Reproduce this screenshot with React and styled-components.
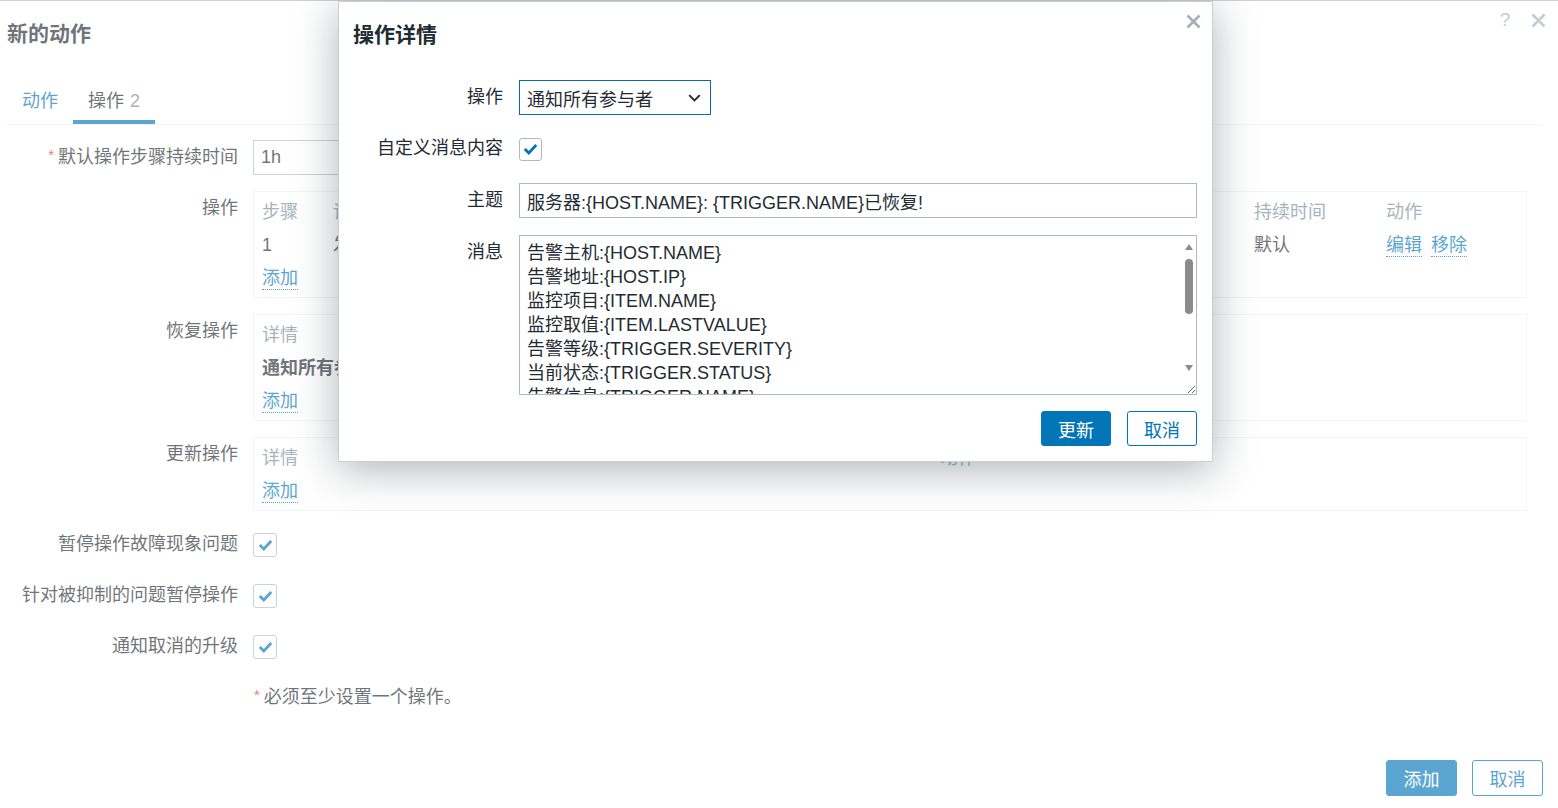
import React from "react";
import styled, { createGlobalStyle } from "styled-components";

const Global = createGlobalStyle`
  html, body { margin: 0; padding: 0; background: #fff; overflow: hidden; }
  body {
    font-family: "Liberation Sans", Arial, "Noto Sans CJK SC", sans-serif;
    font-size: 18px;
    color: #1f2c33;
  }
  * { box-sizing: border-box; }
`;

const Page = styled.div`
  position: relative;
  height: 100vh;
  display: flex;
  flex-direction: column;
  padding: 0 15px 12px 7px;
  border-top: 1px solid #c9d1d6;
`;

const Header = styled.div`
  display: flex;
  justify-content: space-between;
  align-items: flex-start;
  height: 79px;
`;

const Title = styled.h1`
  margin: 0;
  padding-top: 22px;
  font-size: 21px;
  line-height: 21px;
  font-weight: bold;
  color: #1f2c33;
`;

const HeaderIcons = styled.div`
  display: flex;
  gap: 9px;
  margin-top: 7px;
  margin-right: -7px;
`;

const IconBtn = styled.span`
  width: 24px;
  height: 24px;
  display: flex;
  align-items: center;
  justify-content: center;
  color: #a2b1b8;
  font-size: 19px;
  line-height: 24px;
`;

const TabBar = styled.div`
  display: flex;
  border-bottom: 1px solid #ebeef0;
`;

const Tab = styled.div`
  padding: 0 15px;
  height: 44px;
  line-height: 42px;
  border-bottom: 4px solid ${(p) => (p.$active ? "#0275b8" : "transparent")};
  color: ${(p) => (p.$active ? "#1f2c33" : "#0275b8")};
  white-space: nowrap;
`;

const TabCount = styled.span`
  color: #768d99;
  margin-left: 6px;
`;

const Form = styled.div`
  display: grid;
  grid-template-columns: 231px 1fr;
  column-gap: 15px;
  row-gap: 16px;
  padding-top: 15px;
  align-items: start;
`;

const Label = styled.div`
  text-align: right;
  height: ${(p) => p.$h || 35}px;
  line-height: ${(p) => p.$h || 35}px;
  white-space: nowrap;
  color: #1f2c33;
`;

const Req = styled.span`
  color: #e33734;
  font-size: 15px;
  position: relative;
  top: -3px;
  margin-right: 4px;
`;

const Cell = styled.div`
  height: 35px;
  display: flex;
  align-items: center;
`;

const TextInput = styled.input`
  height: 35px;
  width: ${(p) => p.$w || "100%"};
  border: 1px solid #acbbc2;
  border-radius: 0;
  padding: 0 7px;
  font: inherit;
  color: #1f2c33;
  background: #fff;
  outline: none;
  display: block;
`;

const OpsBox = styled.div`
  border: 1px solid #ebeef0;
  padding: 4px 8px 2px;
  margin-right: 16px;
  display: grid;
  grid-template-columns: ${(p) => p.$cols};
`;

const TCell = styled.div`
  line-height: 33px;
  height: 33px;
  white-space: nowrap;
  overflow: hidden;
  color: ${(p) => (p.$head ? "#768d99" : "#1f2c33")};
  font-weight: ${(p) => (p.$bold ? "bold" : "normal")};
  grid-column: ${(p) => (p.$full ? "1 / -1" : "auto")};
  display: flex;
  gap: 9px;
`;

const Link = styled.span`
  color: #0275b8;
  line-height: 22px;
  align-self: center;
  border-bottom: 1px dotted #0275b8;
`;

const CheckBox = styled.span`
  width: ${(p) => p.$size || 24}px;
  height: ${(p) => p.$size || 24}px;
  border: 1px solid #acbbc2;
  border-radius: 3px;
  display: inline-flex;
  align-items: center;
  justify-content: center;
  background: #fff;
`;

const Note = styled.div`
  height: 35px;
  line-height: 35px;
  padding-left: 1px;
  color: #1f2c33;
`;

const Footer = styled.div`
  margin-top: auto;
  display: flex;
  justify-content: flex-end;
  gap: 15px;
`;

const Button = styled.button`
  height: ${(p) => p.$h || 36}px;
  min-width: ${(p) => p.$w || 71}px;
  padding: 0 14px;
  border-radius: 3px;
  border: 1px solid #0275b8;
  background: ${(p) => (p.$secondary ? "#fff" : "#0275b8")};
  color: ${(p) => (p.$secondary ? "#0275b8" : "#fff")};
  font: inherit;
  font-size: 18px;
  cursor: pointer;
`;

const Shade = styled.div`
  position: absolute;
  inset: 0;
  background: rgba(255, 255, 255, 0.35);
  z-index: 1;
`;

const Dialog = styled.div`
  position: absolute;
  left: 338px;
  top: 0;
  width: 875px;
  background: #fff;
  border: 1px solid #c9d0d4;
  box-shadow: 0 8px 40px rgba(20, 35, 45, 0.34);
  z-index: 2;
  padding: 0 15px 15px 14px;
  display: flex;
  flex-direction: column;
`;

const DialogHeader = styled.div`
  display: flex;
  justify-content: space-between;
  align-items: flex-start;
  height: 78px;
  margin-right: -1px;
`;

const DialogForm = styled.div`
  display: grid;
  grid-template-columns: 150px 1fr;
  column-gap: 16px;
  row-gap: 17px;
  align-items: start;
`;

const SelectBtn = styled.div`
  width: 192px;
  height: 35px;
  border: 1px solid #0b6aa8;
  padding: 0 9px 0 7px;
  display: flex;
  align-items: center;
  justify-content: space-between;
  color: #1f2c33;
  background: #fff;
`;

const CheckCell = styled.div`
  height: 34px;
  display: flex;
  align-items: center;
`;

const AreaWrap = styled.div`
  position: relative;
`;

const TextArea = styled.textarea`
  width: 100%;
  height: 160px;
  border: 1px solid #acbbc2;
  border-radius: 0;
  padding: 5px 24px 6px 7px;
  font: inherit;
  line-height: 24px;
  color: #1f2c33;
  resize: vertical;
  outline: none;
  overflow: hidden;
  display: block;
`;

const ScrollBar = styled.div`
  position: absolute;
  top: 1px;
  right: 1px;
  width: 14px;
  height: 143px;
  background: #fff;
  display: flex;
  flex-direction: column;
  align-items: center;
  padding: 8px 0 8px;
  pointer-events: none;
`;

const Arrow = styled.span`
  width: 0;
  height: 0;
  border-left: 4.5px solid transparent;
  border-right: 4.5px solid transparent;
  ${(p) =>
    p.$down
      ? "border-top: 6px solid #8b8b8b; margin-top: auto;"
      : "border-bottom: 6px solid #8b8b8b;"}
`;

const Thumb = styled.span`
  width: 8px;
  height: 55px;
  margin-top: 9px;
  border-radius: 4px;
  background: #8b8b8b;
`;

const DialogFooter = styled.div`
  display: flex;
  justify-content: flex-end;
  gap: 16px;
  margin-top: 16px;
`;

const Check = ({ color = "#0275b8" }) => (
  <svg width="15" height="12" viewBox="0 0 15 12">
    <polyline
      points="1.8,6 5.8,10 13.2,2"
      fill="none"
      stroke={color}
      strokeWidth="2.8"
    />
  </svg>
);

const CloseIcon = () => (
  <svg width="15" height="15" viewBox="0 0 15 15">
    <path d="M1.5 1.5L13.5 13.5M13.5 1.5L1.5 13.5" stroke="#a2b1b8" strokeWidth="2.6" />
  </svg>
);

const Chevron = () => (
  <svg width="13" height="8" viewBox="0 0 13 8">
    <path d="M1.2 1.2L6.5 6.5L11.8 1.2" fill="none" stroke="#1f2c33" strokeWidth="1.9" />
  </svg>
);

const message = [
  "告警主机:{HOST.NAME}",
  "告警地址:{HOST.IP}",
  "监控项目:{ITEM.NAME}",
  "监控取值:{ITEM.LASTVALUE}",
  "告警等级:{TRIGGER.SEVERITY}",
  "当前状态:{TRIGGER.STATUS}",
  "告警信息:{TRIGGER.NAME}",
  "告警时间:{EVENT.DATE} {EVENT.TIME}",
  "恢复时间:{EVENT.RECOVERY.DATE} {EVENT.RECOVERY.TIME}",
  "持续时间:{EVENT.AGE}",
  "事件ID:{EVENT.ID}",
  "问题详情:{ITEM.NAME}:{ITEM.VALUE}",
  "恢复状态:已恢复",
].join("\n");

export default function App() {
  return (
    <>
      <Global />
      <Page>
        <Header>
          <Title>新的动作</Title>
          <HeaderIcons>
            <IconBtn>?</IconBtn>
            <IconBtn>
              <CloseIcon />
            </IconBtn>
          </HeaderIcons>
        </Header>

        <TabBar>
          <Tab>动作</Tab>
          <Tab $active>
            操作<TabCount>2</TabCount>
          </Tab>
        </TabBar>

        <Form>
          <Label>
            <Req>*</Req>默认操作步骤持续时间
          </Label>
          <Cell>
            <TextInput $w="255px" defaultValue="1h" />
          </Cell>

          <Label>操作</Label>
          <OpsBox $cols="71px 787px 134px 132px 1fr">
            <TCell $head>步骤</TCell>
            <TCell $head>详情</TCell>
            <TCell $head>开始于</TCell>
            <TCell $head>持续时间</TCell>
            <TCell $head>动作</TCell>
            <TCell>1</TCell>
            <TCell>发送消息给用户群组: Zabbix administrators 通过 所有介质</TCell>
            <TCell>立即地</TCell>
            <TCell>默认</TCell>
            <TCell>
              <Link>编辑</Link>
              <Link>移除</Link>
            </TCell>
            <TCell $full>
              <Link>添加</Link>
            </TCell>
          </OpsBox>

          <Label>恢复操作</Label>
          <OpsBox $cols="678px 1fr">
            <TCell $head>详情</TCell>
            <TCell $head>动作</TCell>
            <TCell $bold>通知所有参与者</TCell>
            <TCell>
              <Link>编辑</Link>
              <Link>移除</Link>
            </TCell>
            <TCell $full>
              <Link>添加</Link>
            </TCell>
          </OpsBox>

          <Label>更新操作</Label>
          <OpsBox $cols="678px 1fr">
            <TCell $head>详情</TCell>
            <TCell $head>动作</TCell>
            <TCell $full>
              <Link>添加</Link>
            </TCell>
          </OpsBox>

          <Label>暂停操作故障现象问题</Label>
          <Cell>
            <CheckBox>
              <Check />
            </CheckBox>
          </Cell>

          <Label>针对被抑制的问题暂停操作</Label>
          <Cell>
            <CheckBox>
              <Check />
            </CheckBox>
          </Cell>

          <Label>通知取消的升级</Label>
          <Cell>
            <CheckBox>
              <Check />
            </CheckBox>
          </Cell>

          <div />
          <Note>
            <Req>*</Req>必须至少设置一个操作。
          </Note>
        </Form>

        <Footer>
          <Button>添加</Button>
          <Button $secondary>取消</Button>
        </Footer>

        <Shade />

        <Dialog>
          <DialogHeader>
            <Title>操作详情</Title>
            <HeaderIcons>
              <IconBtn>
                <CloseIcon />
              </IconBtn>
            </HeaderIcons>
          </DialogHeader>

          <DialogForm>
            <Label>操作</Label>
            <div>
              <SelectBtn>
                <span>通知所有参与者</span>
                <Chevron />
              </SelectBtn>
            </div>

            <Label $h={33}>自定义消息内容</Label>
            <CheckCell>
              <CheckBox $size={23}>
                <Check />
              </CheckBox>
            </CheckCell>

            <Label>主题</Label>
            <TextInput defaultValue="服务器:{HOST.NAME}: {TRIGGER.NAME}已恢复!" />

            <Label>消息</Label>
            <AreaWrap>
              <TextArea defaultValue={message} />
              <ScrollBar>
                <Arrow />
                <Thumb />
                <Arrow $down />
              </ScrollBar>
            </AreaWrap>
          </DialogForm>

          <DialogFooter>
            <Button $w={70} $h={35}>更新</Button>
            <Button $secondary $w={70} $h={35}>取消</Button>
          </DialogFooter>
        </Dialog>
      </Page>
    </>
  );
}
